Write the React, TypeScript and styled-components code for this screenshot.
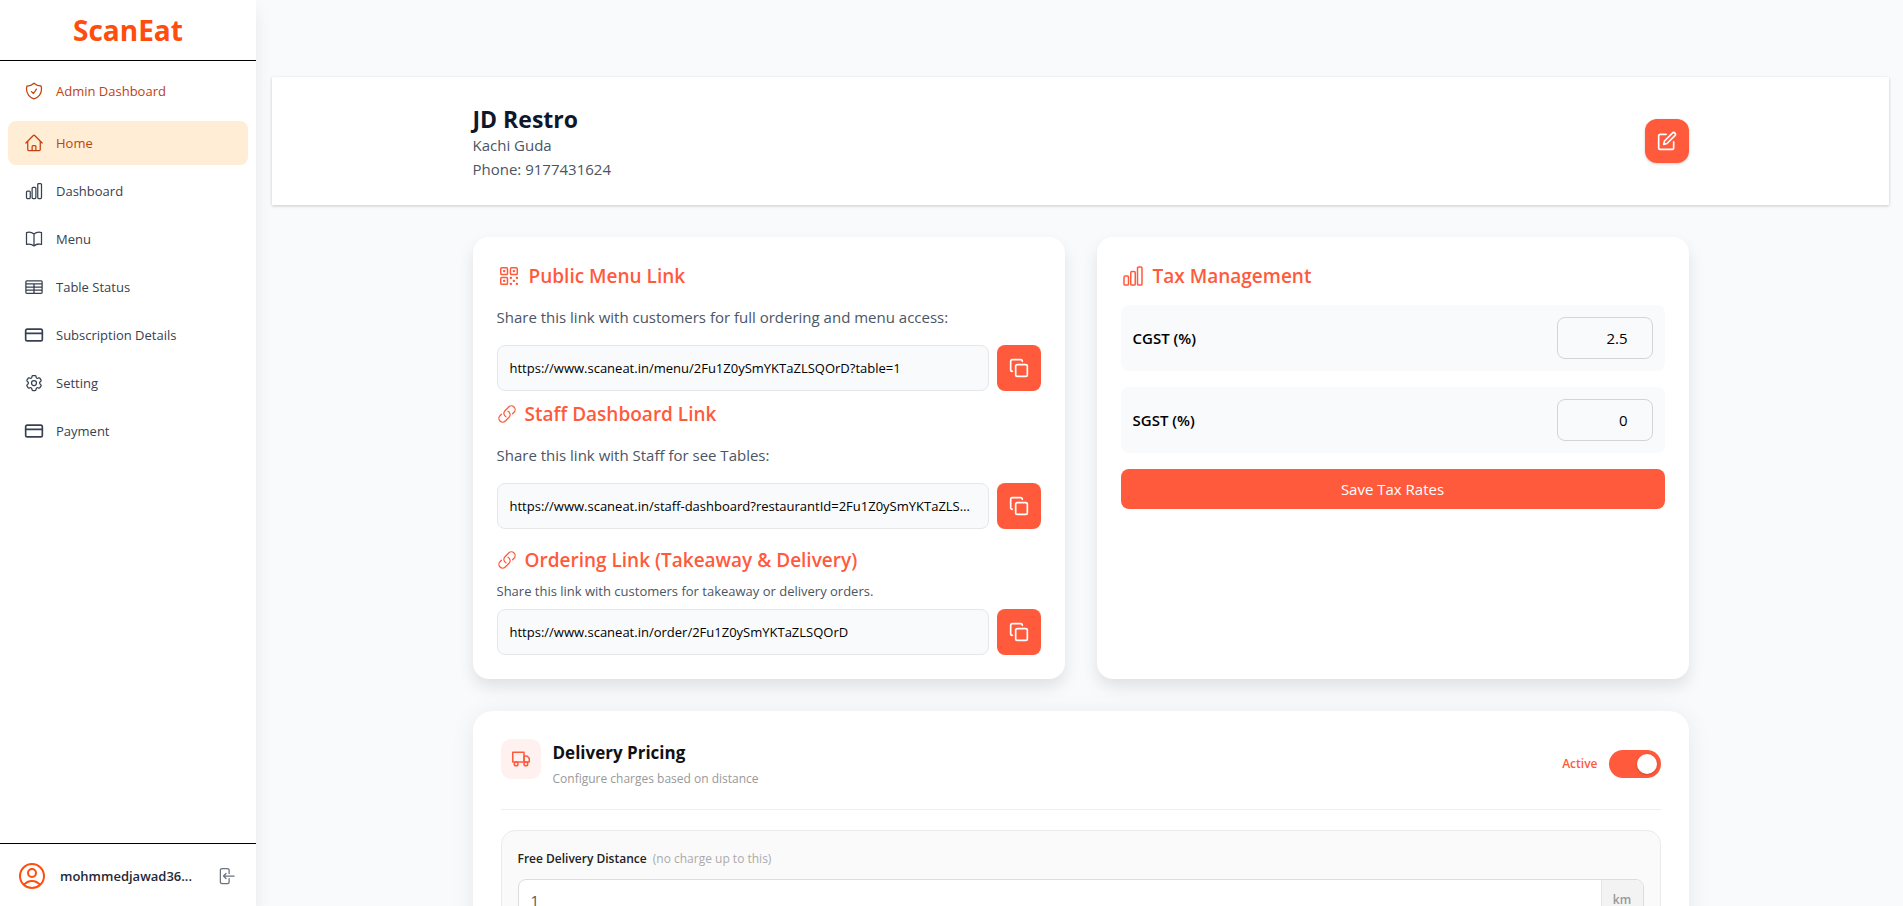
import React from "react";
import styled, { createGlobalStyle, css } from "styled-components";
import {
  HiOutlineShieldCheck, HiOutlineHome, HiOutlineChartBar, HiOutlineTableCells, HiOutlineLink,
  HiOutlineCog6Tooth, HiOutlineUserCircle, HiOutlineBookOpen, HiOutlineQrCode,
} from "react-icons/hi2";
import { FiEdit, FiTruck } from "react-icons/fi";
import { Copy, CreditCard } from "lucide-react";

const accent = "#ff5a3c";

const GlobalStyle = createGlobalStyle`
  *, *::before, *::after { box-sizing: border-box; }
  body {
    margin: 0;
    background: #f8fafc;
    color: #000;
    font-family: "Open Sans", "Noto Sans", sans-serif;
    font-size: 15px;
    line-height: 24px;
  }
  h1, h2, p { margin: 0; }
  button, input { font: inherit; color: inherit; }
  button { border: 0; padding: 0; cursor: pointer; }
`;

const Layout = styled.div`
  display: flex;
  height: 100vh;
  overflow: hidden;
`;

const Sidebar = styled.aside`
  display: flex;
  flex-direction: column;
  flex: none;
  width: 256px;
  background: #fff;
  box-shadow: 0 10px 16px rgba(15, 23, 42, 0.08);
`;

const Brand = styled.div`
  height: 61px;
  border-bottom: 1px solid #000;
  text-align: center;
  color: #ff4d0d;
  font-size: 28px;
  font-weight: 700;
  line-height: 60px;
`;

const Nav = styled.nav`
  display: flex;
  flex-direction: column;
  flex: 1;
  gap: 4px;
  padding: 8px;
`;

const NavLink = styled.a<{ $tone?: "admin" | "active" }>`
  display: flex;
  align-items: center;
  gap: 12px;
  height: 44px;
  padding: 0 16px;
  border-radius: 8px;
  color: #374151;
  font-size: 13px;
  text-decoration: none;
  svg { width: 20px; height: 20px; }
  ${(p) => p.$tone && css`color: #c2410c;`}
  ${(p) => p.$tone === "admin" && css`margin-bottom: 4px;`}
  ${(p) => p.$tone === "active" && css`background: #ffedd5;`}
`;

const Account = styled.div`
  display: flex;
  align-items: center;
  gap: 12px;
  height: 63px;
  padding: 2px 16px 0;
  border-top: 1px solid #000;
  color: #1f2937;
  font-size: 13px;
  font-weight: 600;
`;

const AccountName = styled.span`
  flex: 1;
  overflow: hidden;
  text-overflow: ellipsis;
  white-space: nowrap;
`;

const LogoutButton = styled.button`
  display: flex;
  padding: 4px;
  background: none;
  color: #6b7280;
`;

const Main = styled.main`
  flex: 1;
  min-width: 0;
  overflow: hidden;
  padding: 77px 14px 0 16px;
`;

const Container = styled.div`
  width: 100%;
  max-width: 1216px;
  margin: 0 auto;
`;

const Header = styled.header`
  padding: 24px;
  background: #fff;
  box-shadow: 0 1px 3px rgba(0, 0, 0, 0.2);
`;

const HeaderRow = styled(Container)`
  display: flex;
  align-items: center;
  justify-content: space-between;
`;

const Restaurant = styled.div`
  padding-top: 4px;
`;

const RestaurantName = styled.h1`
  color: #0f172a;
  font-size: 23px;
  font-weight: 700;
  line-height: 28px;
`;

const Detail = styled.p`
  color: #4b5563;
`;

const EditButton = styled.button`
  display: grid;
  place-items: center;
  width: 44px;
  height: 44px;
  border-radius: 12px;
  background: ${accent};
  color: #fff;
  box-shadow: 0 1px 3px rgba(0, 0, 0, 0.2);
`;

const Cards = styled(Container)`
  display: grid;
  grid-template-columns: 1fr 1fr;
  gap: 32px;
  padding: 32px 0;
`;

const Card = styled.section`
  padding: 24px;
  border-radius: 16px;
  background: #fff;
  box-shadow: 0 8px 16px rgba(0, 0, 0, 0.1);
`;

const CardTitle = styled.h2`
  display: flex;
  align-items: center;
  gap: 8px;
  color: ${accent};
  font-size: 19px;
  font-weight: 600;
  line-height: 30px;
`;

const LinkBlock = styled.div<{ $spaced?: boolean }>`
  margin-top: ${(p) => (p.$spaced ? 16 : 8)}px;
  &:first-child { margin-top: 0; }
`;

const Hint = styled.p<{ $small?: boolean }>`
  margin: 14px 0 16px;
  color: #4b5563;
  ${(p) => p.$small && css`
    margin: 6px 0 8px;
    font-size: 13px;
    line-height: 20px;
  `}
`;

const CopyRow = styled.div`
  display: flex;
  gap: 8px;
`;

const LinkInput = styled.input`
  flex: 1;
  min-width: 0;
  height: 46px;
  padding: 0 12px;
  border: 1px solid #e5e7eb;
  border-radius: 8px;
  background: #f9fafb;
  font-size: 13px;
  text-overflow: ellipsis;
`;

const CopyButton = styled.button`
  display: grid;
  place-items: center;
  width: 44px;
  border-radius: 8px;
  background: ${accent};
  color: #fff;
`;

const TaxTitle = styled(CardTitle)`
  margin-bottom: 14px;
`;

const TaxRow = styled.label`
  display: flex;
  align-items: center;
  justify-content: space-between;
  height: 66px;
  margin-bottom: 16px;
  padding: 0 12px;
  border-radius: 8px;
  background: #f9fafb;
  font-weight: 600;
`;

const TaxInput = styled.input`
  width: 96px;
  height: 42px;
  padding: 0 24px;
  border: 1px solid #d1d5db;
  border-radius: 8px;
  background: transparent;
  font-weight: 400;
  text-align: right;
`;

const SaveButton = styled.button`
  width: 100%;
  height: 40px;
  border-radius: 8px;
  background: ${accent};
  color: #fff;
`;

const Delivery = styled(Container).attrs({ as: "section" })`
  padding: 28px;
  border-radius: 20px;
  background: #fff;
  box-shadow: 0 4px 24px rgba(0, 0, 0, 0.08);
`;

const DeliveryHead = styled.div`
  display: flex;
  align-items: flex-start;
  gap: 12px;
  height: 71px;
  border-bottom: 1px solid #f0f0f0;
`;

const TruckBadge = styled.span`
  display: grid;
  place-items: center;
  width: 40px;
  height: 40px;
  border-radius: 10px;
  background: #fff1f0;
  color: ${accent};
`;

const DeliveryText = styled.div`
  flex: 1;
`;

const DeliveryTitle = styled.h2`
  color: #111;
  font-size: 17px;
  font-weight: 700;
  line-height: 28px;
`;

const DeliveryHint = styled.p`
  color: #999;
  font-size: 12px;
`;

const Toggle = styled.label`
  display: flex;
  align-items: center;
  gap: 11px;
  margin-top: 11px;
  color: ${accent};
  font-size: 12px;
  font-weight: 600;
`;

const Switch = styled.input`
  appearance: none;
  display: flex;
  align-items: center;
  width: 52px;
  height: 28px;
  margin: 0;
  padding: 4px;
  border-radius: 14px;
  background: #ccc;
  cursor: pointer;
  &::before {
    content: "";
    width: 20px;
    height: 20px;
    border-radius: 50%;
    background: #fff;
    box-shadow: 0 1px 3px rgba(0, 0, 0, 0.2);
  }
  &:checked {
    justify-content: flex-end;
    background: ${accent};
  }
`;

const Distance = styled.div`
  margin-top: 20px;
  padding: 16px;
  border: 1px solid #ebebeb;
  border-radius: 14px;
  background: #fafafa;
`;

const DistanceLabel = styled.label`
  display: block;
  margin-bottom: 8px;
  color: #222;
  font-size: 12px;
  font-weight: 600;
  span { margin-left: 3px; color: #aaa; font-weight: 400; }
`;

const UnitField = styled.div`
  display: flex;
  height: 42px;
  overflow: hidden;
  border: 1px solid #ddd;
  border-radius: 8px;
  background: #fff;
`;

const UnitInput = styled.input`
  flex: 1;
  min-width: 0;
  border: 0;
  padding: 0 12px;
  background: none;
  color: #555;
`;

const Unit = styled.span`
  width: 42px;
  border-left: 1px solid #e5e5e5;
  background: #f3f3f3;
  color: #999;
  font-size: 12px;
  font-weight: 600;
  line-height: 40px;
  text-align: center;
`;

const navItems: { label: string; icon: React.ReactNode; tone?: "admin" | "active" }[] = [
  { label: "Admin Dashboard", icon: <HiOutlineShieldCheck />, tone: "admin" },
  { label: "Home", icon: <HiOutlineHome />, tone: "active" },
  { label: "Dashboard", icon: <HiOutlineChartBar /> },
  { label: "Menu", icon: <HiOutlineBookOpen /> },
  { label: "Table Status", icon: <HiOutlineTableCells /> },
  { label: "Subscription Details", icon: <CreditCard /> },
  { label: "Setting", icon: <HiOutlineCog6Tooth /> },
  { label: "Payment", icon: <CreditCard /> },
];

/* A door outline with an arrow that enters it from the right. */
function LogoutIcon() {
  return (
    <svg width="20" height="20" viewBox="0 0 24 24" fill="none" stroke="currentColor"
      strokeWidth="1.5" strokeLinecap="round" strokeLinejoin="round" aria-hidden="true">
      <path d="M15.75 9V5.25A2.25 2.25 0 0 0 13.5 3h-6a2.25 2.25 0 0 0-2.25 2.25v13.5A2.25 2.25 0 0 0 7.5 21h6a2.25 2.25 0 0 0 2.25-2.25V15M12 9l-3 3m0 0 3 3m-3-3h12.75" />
    </svg>
  );
}

function CopyField({ label, value }: { label: string; value: string }) {
  return (
    <CopyRow>
      <LinkInput aria-label={label} readOnly value={value} />
      <CopyButton aria-label={"Copy " + label}><Copy size={20} strokeWidth={2} /></CopyButton>
    </CopyRow>
  );
}

export default function App() {
  return (
    <>
      <GlobalStyle />
      <Layout>
        <Sidebar>
          <Brand>ScanEat</Brand>
          <Nav>
            {navItems.map((n) => (
              <NavLink key={n.label} href="#" $tone={n.tone}>{n.icon}{n.label}</NavLink>
            ))}
          </Nav>
          <Account>
            <HiOutlineUserCircle size={32} color="#ff4d0d" />
            <AccountName>mohmmedjawad36...</AccountName>
            <LogoutButton aria-label="Log out"><LogoutIcon /></LogoutButton>
          </Account>
        </Sidebar>
        <Main>
          <Header>
            <HeaderRow>
              <Restaurant>
                <RestaurantName>JD Restro</RestaurantName>
                <Detail>Kachi Guda</Detail>
                <Detail>Phone: 9177431624</Detail>
              </Restaurant>
              <EditButton aria-label="Edit restaurant"><FiEdit size={20} /></EditButton>
            </HeaderRow>
          </Header>
          <Cards>
            <Card>
              <LinkBlock>
                <CardTitle><HiOutlineQrCode size={24} />Public Menu Link</CardTitle>
                <Hint>Share this link with customers for full ordering and menu access:</Hint>
                <CopyField label="Public menu link" value="https://www.scaneat.in/menu/2Fu1Z0ySmYKTaZLSQOrD?table=1" />
              </LinkBlock>
              <LinkBlock>
                <CardTitle><HiOutlineLink size={20} />Staff Dashboard Link</CardTitle>
                <Hint>Share this link with Staff for see Tables:</Hint>
                <CopyField label="Staff dashboard link" value="https://www.scaneat.in/staff-dashboard?restaurantId=2Fu1Z0ySmYKTaZLSQOrD" />
              </LinkBlock>
              <LinkBlock $spaced>
                <CardTitle><HiOutlineLink size={20} />Ordering Link (Takeaway &amp; Delivery)</CardTitle>
                <Hint $small>Share this link with customers for takeaway or delivery orders.</Hint>
                <CopyField label="Ordering link" value="https://www.scaneat.in/order/2Fu1Z0ySmYKTaZLSQOrD" />
              </LinkBlock>
            </Card>
            <Card>
              <TaxTitle><HiOutlineChartBar size={24} />Tax Management</TaxTitle>
              <TaxRow>CGST (%)<TaxInput inputMode="decimal" defaultValue="2.5" /></TaxRow>
              <TaxRow>SGST (%)<TaxInput inputMode="decimal" defaultValue="0" /></TaxRow>
              <SaveButton>Save Tax Rates</SaveButton>
            </Card>
          </Cards>
          <Delivery>
            <DeliveryHead>
              <TruckBadge><FiTruck size={18} /></TruckBadge>
              <DeliveryText>
                <DeliveryTitle>Delivery Pricing</DeliveryTitle>
                <DeliveryHint>Configure charges based on distance</DeliveryHint>
              </DeliveryText>
              <Toggle>Active<Switch type="checkbox" role="switch" defaultChecked /></Toggle>
            </DeliveryHead>
            <Distance>
              <DistanceLabel htmlFor="free-distance">Free Delivery Distance <span>(no charge up to this)</span></DistanceLabel>
              <UnitField><UnitInput id="free-distance" defaultValue="1" /><Unit>km</Unit></UnitField>
            </Distance>
          </Delivery>
        </Main>
      </Layout>
    </>
  );
}
